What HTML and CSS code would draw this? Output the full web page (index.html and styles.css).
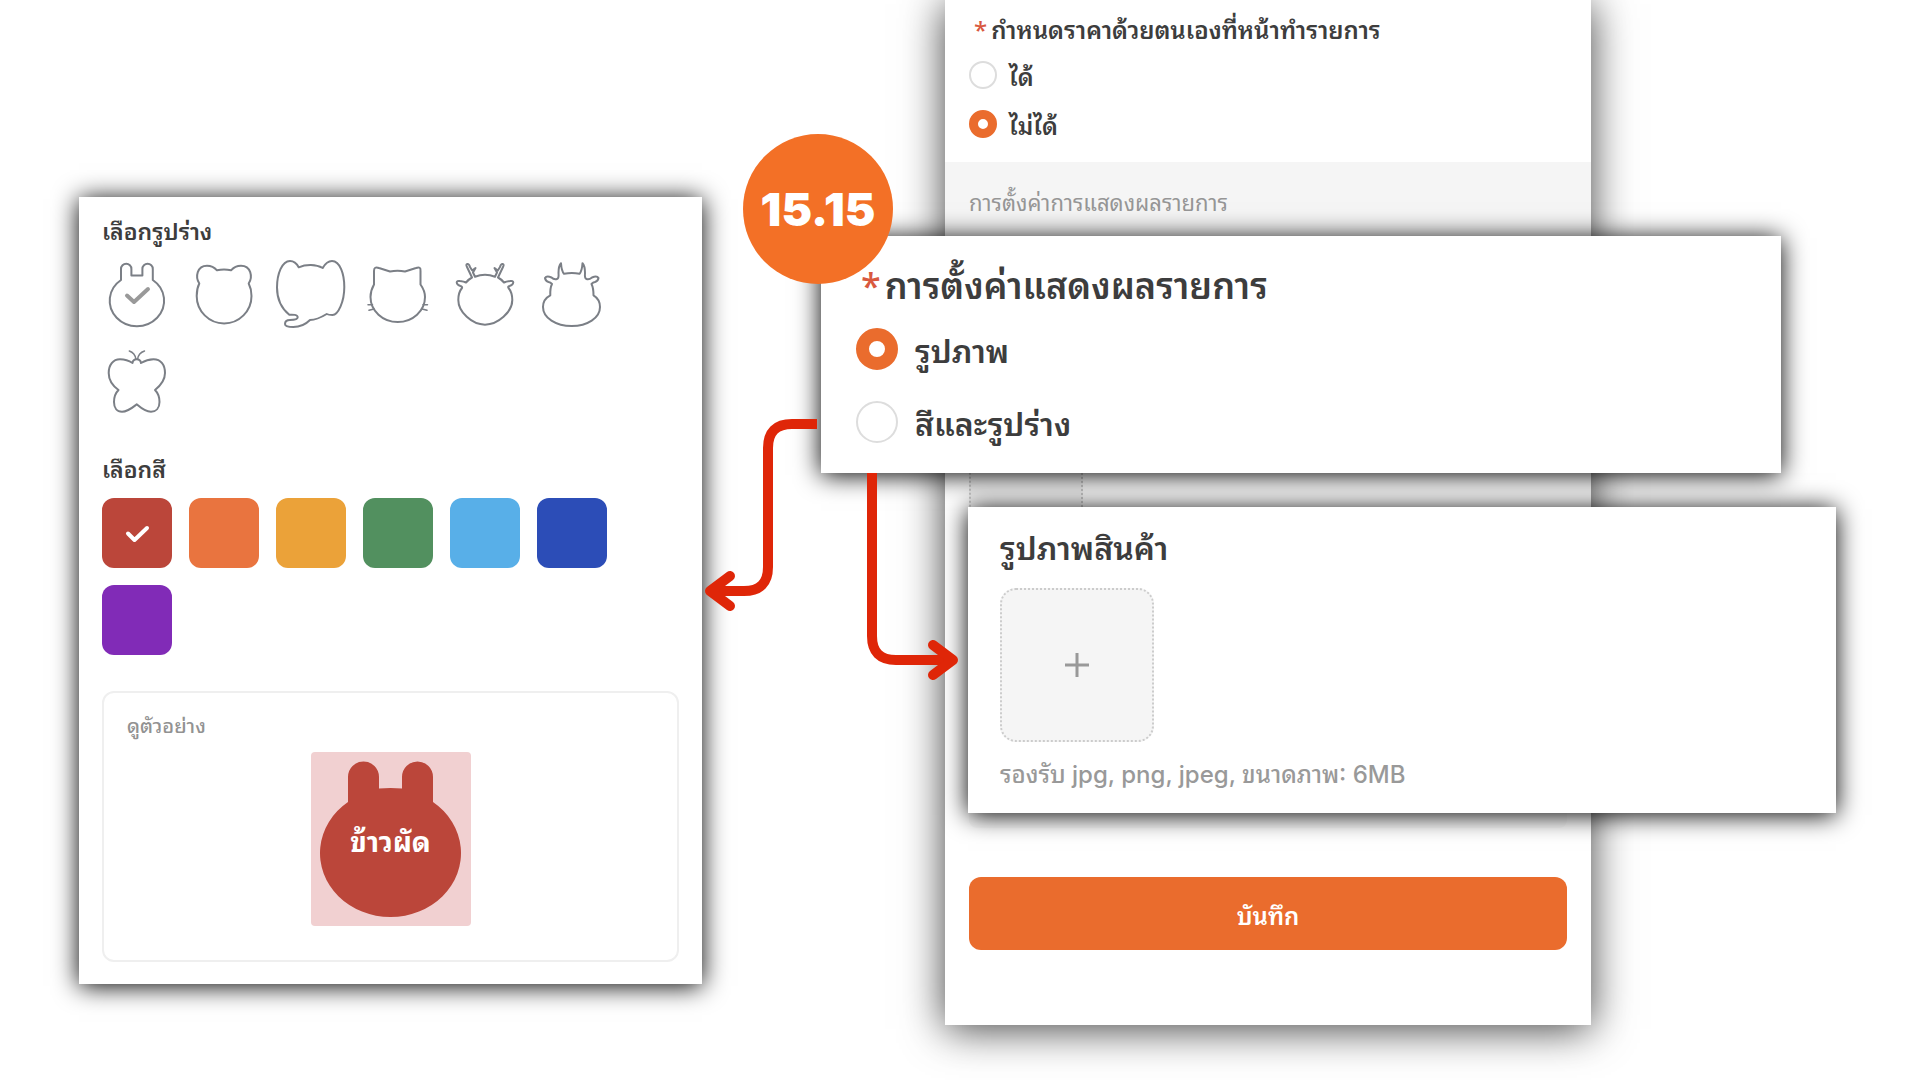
FILE: index.html
```html
<!DOCTYPE html>
<html lang="th">
<head>
    <meta charset="UTF-8">
    <title>การตั้งค่าแสดงผลรายการ</title>
    <link rel="stylesheet" href="styles.css">
</head>
<body>
    <main class="stage">
        <section class="card picker">
            <h2 class="title">เลือกรูปร่าง</h2>
            <div class="options">
                <label class="shape">
                    <input type="radio" name="shape" aria-label="กระต่าย" checked>
                    <svg viewBox="0 0 70 70">
                        <path d="M19 20V9a5.2 5.2 0 0 1 10.4 0v6.5h11V9a5.2 5.2 0 0 1 10.4 0v11A27.2 25.5 0 1 1 19 20z"/>
                        <path class="tick" d="M25 35.5l7 6.5 14-13"/>
                    </svg>
                </label>
                <label class="shape">
                    <input type="radio" name="shape" aria-label="หมี">
                    <svg viewBox="0 0 70 70">
                        <path d="M10.3 23.5C6 17 8 5.7 18 5.7c5 0 8 2.3 10 4.6q7-1.7 14 0c2-2.3 5-4.6 10-4.6 10 0 12 11.3 7.7 17.8 1.8 3.5 2.8 7.5 2.8 12.5A27.3 27.3 0 0 1 7.7 36c0-5 .8-9 2.6-12.5z"/>
                    </svg>
                </label>
                <label class="shape">
                    <input type="radio" name="shape" aria-label="ช้าง">
                    <svg viewBox="0 0 70 70">
                        <path d="M13.3 54.7C5 48 1 38 1 27.5 1 14 6 1 14 1c4 0 7 3 8.7 6.3C30 4 40 4 46.7 8 49 4 52 1 56 1c8 0 12.3 13 12.3 26 0 15-6.3 28-11.8 28-2.5 0-4 0-5.8-1C45 57.5 40 60 34 60c-5 5-11 7-16.7 7C12 67 9 66 9 64c0-3 2-4 5-4 3 0 7.7-.5 7.7-2.7 0-2.8-4.7-2.8-8.4-2.6z"/>
                    </svg>
                </label>
                <label class="shape">
                    <input type="radio" name="shape" aria-label="แมว">
                    <svg viewBox="0 0 70 70">
                        <path d="M11 24.5V11Q11 6 16 8l11 3.5q7.5-1.5 15 0L53 8q5-2 4.5 3v13.5C60 28 62 32 62 37a27.2 25 0 0 1-54.5 0c0-5 1.5-9 3.5-12.5z"/>
                        <path class="thin" d="M5 44.7h4.5M6 50.3l5-1.3M60 44.7h4.5M59 49l5 1.3"/>
                    </svg>
                </label>
                <label class="shape">
                    <input type="radio" name="shape" aria-label="กวาง">
                    <svg viewBox="0 0 70 70">
                        <path d="M12 28C9.5 31 8.3 35 8.3 40 8.3 52 22 64.7 35 64.7S62.3 52 62.3 40C62.3 35 61 31 58.5 28Q57.5 26.5 59.5 26 63 25 63.3 22.5 63.3 20.5 60 21 56 21.5 54 22.5 51 19 48 17.5L53 7Q54.5 4.3 52.5 4 51 3.8 50 7L47.8 10.5 44.5 8 47 12.5 45 16.7Q35 13 25 16.7L23 12.5 25.5 8 22.2 10.5 20 7Q19 3.8 17.5 4 15.5 4.3 17 7L22 17.5Q19 19 16 22.5 14 21.5 10 21 6.7 20.5 6.7 22.5 7 25 10.5 26 12.5 26.5 12 28z"/>
                    </svg>
                </label>
                <label class="shape">
                    <input type="radio" name="shape" aria-label="วัว">
                    <svg viewBox="0 0 70 70">
                        <path d="M13.3 35.3C8 38 6 42 6 47 6 58 19 66 34.7 66S63 58 63 47C63 42 61 38 56.5 35.3Q56.5 28 54.5 24 56 22.3 58 22 61 21 61.5 18 60 15.5 55 17.5 52 20 49.5 19 47.5 18.5 48 13 48 6 45.5 3.3 45 11 42.5 13.8 35 12.3 27 13.8 24.5 11 24 3.3 21.5 6 21.5 13 22 18.5 20 19 17 20 14.5 17.5 9.5 15.5 8 18 8.5 21 11.5 22 13.5 22.3 15 24 13 28 13.3 35.3z"/>
                    </svg>
                </label>
                <label class="shape">
                    <input type="radio" name="shape" aria-label="ผีเสื้อ">
                    <svg viewBox="0 0 70 70">
                        <path d="M30.5 16Q31 12.3 34.7 12.3T39 16C44 13 48 12.3 51.5 12.3 59 12.3 63 18 63 26 63 33 58 39 53 43 56 46 57.5 50 57.5 55 57.5 61 54 64.7 49 64.7 43 64.7 39 61 34.7 57.3 30 61 26 64.7 20 64.7 15 64.7 12 61 12 55 12 50 13.5 46 16.5 43 11 39 6.7 33 6.7 26 6.7 18 11 12.3 18 12.3 22 12.3 26 13 30.5 16z"/>
                        <path class="thin" d="M27.3 4Q33 6 34 12.3M42.5 4Q36.5 6 35.5 12.3"/>
                    </svg>
                </label>
            </div>

            <h2 class="title">เลือกสี</h2>
            <div class="options">
                <label class="swatch red">
                    <input type="radio" name="color" aria-label="แดง" checked>
                    <svg viewBox="0 0 70 70"><path class="tick" d="M26 35.5l6.5 6.5L45 30"/></svg>
                </label>
                <label class="swatch orange"><input type="radio" name="color" aria-label="ส้ม"></label>
                <label class="swatch yellow"><input type="radio" name="color" aria-label="เหลือง"></label>
                <label class="swatch green"><input type="radio" name="color" aria-label="เขียว"></label>
                <label class="swatch sky"><input type="radio" name="color" aria-label="ฟ้า"></label>
                <label class="swatch blue"><input type="radio" name="color" aria-label="น้ำเงิน"></label>
                <label class="swatch purple"><input type="radio" name="color" aria-label="ม่วง"></label>
            </div>

            <div class="preview">
                <p class="preview-label">ดูตัวอย่าง</p>
                <div class="preview-tile">
                    <svg viewBox="0 0 160 174">
                        <path d="M37 50V25a15.5 15.5 0 0 1 31 0v11.5q11.5-1 23 0V25a15.5 15.5 0 0 1 31 0v25a70.5 64 0 1 1-85 0z"/>
                    </svg>
                    <span>ข้าวผัด</span>
                </div>
            </div>
        </section>

        <section class="panel">
            <form class="form">
                <fieldset class="group">
                    <legend class="title required">กำหนดราคาด้วยตนเองที่หน้าทำรายการ</legend>
                    <label class="radio"><input type="radio" name="price">ได้</label>
                    <label class="radio"><input type="radio" name="price" checked>ไม่ได้</label>
                </fieldset>
                <h3 class="band">การตั้งค่าการแสดงผลรายการ</h3>
                <div class="thumb"></div>
                <div class="note"></div>
                <button class="save" type="button">บันทึก</button>
            </form>

            <div class="card display">
                <fieldset class="group large">
                    <legend class="title required">การตั้งค่าแสดงผลรายการ</legend>
                    <label class="radio"><input type="radio" name="display" checked>รูปภาพ</label>
                    <label class="radio"><input type="radio" name="display">สีและรูปร่าง</label>
                </fieldset>
                <div class="badge">15.15</div>
            </div>

            <div class="card upload">
                <h2 class="title">รูปภาพสินค้า</h2>
                <button class="add" type="button" aria-label="เพิ่มรูปภาพ">
                    <svg viewBox="0 0 24 24"><path d="M12 0v24M0 12h24"/></svg>
                </button>
                <p class="hint">รองรับ jpg, png, jpeg, ขนาดภาพ: 6MB</p>
            </div>

            <svg class="arrow to-picker" viewBox="0 0 116 194">
                <path d="M115 12H90Q66 12 66 36V155Q66 179 42 179H9"/>
                <path class="head" d="M28 164L8 179l20 15"/>
            </svg>
            <svg class="arrow to-upload" viewBox="0 0 96 210">
                <path d="M8 0V163Q8 187 32 187H88"/>
                <path class="head" d="M69 172l20 15-20 15"/>
            </svg>
        </section>
    </main>
</body>
</html>
```
FILE: styles.css
```css
* {
    box-sizing: border-box;
}

body {
    margin: 0;
    background: white;
    color: #3d3d3d;
    font-family: "Noto Sans", "Noto Sans Thai Looped", "Loma", "Noto Sans Thai", sans-serif;
    overflow-x: hidden;
}

h2, h3, p, fieldset, legend {
    margin: 0;
    padding: 0;
    border: 0;
}

.stage {
    display: grid;
    grid-template-columns: 623fr 646fr;
    column-gap: 243px;
    align-items: start;
    min-height: 100vh;
    padding: 0 329px 0 79px;
}

.card {
    background: white;
    box-shadow: 0 2px 24px black;
}

.title {
    font-size: 24px;
    line-height: 32px;
    font-weight: 600;
}

.required::before {
    content: "*";
    margin: 0 4px 0 5px;
    color: #d9593f;
    font-weight: 500;
}

/* shape and colour picker */
.picker {
    margin-top: 197px;
    padding: 18px 23px 22px;
}

.picker .title {
    font-size: 23px;
}

.options {
    display: flex;
    flex-wrap: wrap;
    gap: 17px;
    margin: 13px 0 36px;
}

.shape,
.swatch {
    position: relative;
    width: 70px;
    height: 70px;
    cursor: pointer;
}

.shape input,
.swatch input {
    position: absolute;
    inset: 0;
    width: 100%;
    height: 100%;
    margin: 0;
    opacity: 0;
}

.shape svg,
.swatch svg {
    display: block;
    fill: none;
    stroke: #7b7f86;
    stroke-width: 2;
    stroke-linecap: round;
    stroke-linejoin: round;
}

.shape .thin {
    stroke-width: 1.5;
}

.shape .tick {
    stroke: #999;
    stroke-width: 4;
}

.swatch {
    border-radius: 12px;
}

.swatch .tick {
    stroke: white;
    stroke-width: 4;
}

.red { background: #bb463a; }
.orange { background: #e9743f; }
.yellow { background: #eba239; }
.green { background: #52905f; }
.sky { background: #58afe8; }
.blue { background: #2c4db7; }
.purple { background: #812bb7; }

.preview {
    padding: 19px 23px 34px;
    border: 2px solid #efefef;
    border-radius: 12px;
}

.preview-label {
    color: #929292;
    font-size: 20px;
    line-height: 28px;
    font-weight: 500;
}

.preview-tile {
    display: grid;
    place-items: center;
    width: 160px;
    margin: 12px auto 0;
    border-radius: 4px;
    background: #f1d0d1;
}

.preview-tile svg,
.preview-tile span {
    grid-area: 1 / 1;
}

.preview-tile svg {
    display: block;
    width: 100%;
    fill: #bb463a;
}

.preview-tile span {
    color: white;
    font-size: 28px;
    font-weight: 700;
}

/* product form behind the callouts */
.panel {
    position: relative;
    background: white;
    box-shadow: 0 4px 40px rgba(0, 0, 0, .75);
}

.form {
    padding-bottom: 75px;
}

.form .group {
    padding: 4px 24px 14px;
}

.form .title {
    padding-top: 14px;
}

.radio {
    display: flex;
    align-items: center;
    gap: 12px;
    height: 49px;
    font-size: 24px;
    font-weight: 600;
}

.radio input {
    appearance: none;
    width: 28px;
    height: 28px;
    margin: 0;
    border: 2px solid #ddd;
    border-radius: 50%;
    background: white;
}

.radio input:checked {
    border: 9px solid #ea6c2d;
}

.band {
    padding: 26px 24px 40px;
    background: #f5f5f5;
    color: #969696;
    font-size: 22px;
    line-height: 28px;
    font-weight: 400;
}

.thumb {
    width: 114px;
    height: 114px;
    margin: 170px 24px 0;
    border: 2px dotted #ccc;
    border-radius: 8px;
    background: #f5f5f5;
}

.note {
    height: 200px;
    margin: 88px 24px 49px;
    border-radius: 8px;
    background: #fafafa;
}

.save {
    display: block;
    width: calc(100% - 48px);
    height: 73px;
    margin: 0 24px;
    border: 0;
    border-radius: 12px;
    background: #ea6c2d;
    color: white;
    font: inherit;
    font-size: 24px;
    font-weight: 600;
}

/* callouts */
.display {
    position: absolute;
    top: 236px;
    left: -124px;
    right: -190px;
    padding: 24px 35px 15px;
}

.large .title {
    font-size: 36px;
    line-height: 52px;
}

.large .radio {
    gap: 17px;
    height: 73px;
    font-size: 32px;
}

.large .radio input {
    width: 42px;
    height: 42px;
}

.large .radio input:checked {
    border-width: 13px;
}

.badge {
    position: absolute;
    top: -102px;
    left: -78px;
    display: flex;
    align-items: center;
    justify-content: center;
    width: 150px;
    height: 150px;
    border-radius: 50%;
    background: #f37026;
    color: white;
    font-family: "Inter", sans-serif;
    font-size: 46px;
    font-weight: 900;
}

.upload {
    position: absolute;
    top: 507px;
    left: 23px;
    right: -245px;
    padding: 21px 32px 21px;
}

.upload .title {
    font-size: 32px;
    line-height: 40px;
}

.add {
    display: flex;
    align-items: center;
    justify-content: center;
    width: 154px;
    height: 154px;
    margin: 20px 0 16px;
    border: 2px dotted #ccc;
    border-radius: 16px;
    background: #f5f5f5;
}

.add svg {
    width: 24px;
    stroke: #999;
    stroke-width: 3;
}

.hint {
    color: #999;
    font-family: "Inter", "Noto Sans Thai Looped", "Loma", "Noto Sans Thai", sans-serif;
    font-size: 24px;
    line-height: 34px;
    font-weight: 500;
}

.arrow {
    position: absolute;
    overflow: visible;
    fill: none;
    stroke: #df2608;
    stroke-width: 10;
    stroke-linejoin: round;
}

.arrow .head {
    stroke-linecap: round;
}

.to-picker {
    top: 412px;
    left: -243px;
    width: 116px;
}

.to-upload {
    top: 473px;
    left: -81px;
    width: 96px;
}
```
